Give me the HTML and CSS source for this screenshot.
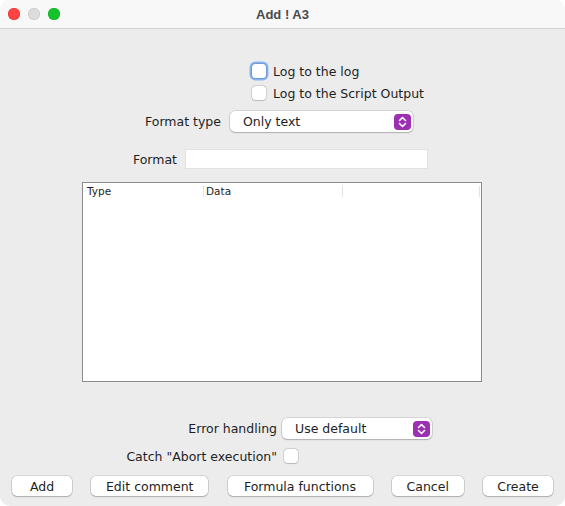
FILE: index.html
```html
<!DOCTYPE html>
<html>
<head>
<meta charset="utf-8">
<title>Add ! A3</title>
<link rel="stylesheet" href="styles.css">
</head>
<body>
<div class="window">
  <div class="titlebar">
    <div class="lights">
      <span class="light red"></span>
      <span class="light gray"></span>
      <span class="light green"></span>
    </div>
    <div class="title">Add ! A3</div>
  </div>
  <div class="content">
    <div class="check-row first">
      <span class="checkbox focused"></span>
      <span class="check-label">Log to the log</span>
    </div>
    <div class="check-row second">
      <span class="checkbox"></span>
      <span class="check-label">Log to the Script Output</span>
    </div>
    <div class="form-row type-row">
      <span class="label type-label">Format type</span>
      <div class="select type-select">
        <span class="select-text">Only text</span>
        <span class="stepper"><svg width="17" height="16" viewBox="0 0 17 16"><path d="M5.5 6.5 L8.5 3.5 L11.5 6.5 M5.5 9.5 L8.5 12.5 L11.5 9.5" fill="none" stroke="#fff" stroke-width="1.6" stroke-linecap="round" stroke-linejoin="round"/></svg></span>
      </div>
    </div>
    <div class="form-row format-row">
      <span class="label format-label">Format</span>
      <div class="input"></div>
    </div>
    <div class="table">
      <div class="thead">
        <div class="th c1">Type</div>
        <div class="th c2">Data</div>
        <div class="th c3"></div>
      </div>
    </div>
    <div class="form-row error-row">
      <span class="label error-label">Error handling</span>
      <div class="select error-select">
        <span class="select-text">Use default</span>
        <span class="stepper"><svg width="17" height="16" viewBox="0 0 17 16"><path d="M5.5 6.5 L8.5 3.5 L11.5 6.5 M5.5 9.5 L8.5 12.5 L11.5 9.5" fill="none" stroke="#fff" stroke-width="1.6" stroke-linecap="round" stroke-linejoin="round"/></svg></span>
      </div>
    </div>
    <div class="form-row catch-row">
      <span class="label catch-label">Catch "Abort execution"</span>
      <span class="checkbox"></span>
    </div>
    <div class="buttons">
      <button class="btn b-add">Add</button>
      <button class="btn b-edit">Edit comment</button>
      <button class="btn b-formula">Formula functions</button>
      <button class="btn b-cancel">Cancel</button>
      <button class="btn b-create">Create</button>
    </div>
  </div>
</div>
</body>
</html>
```
FILE: styles.css
```css
* { box-sizing: border-box; }
html, body { margin: 0; padding: 0; background: #ffffff; }
body {
  width: 565px;
  height: 506px;
  overflow: hidden;
  font-family: "DejaVu Sans", sans-serif;
  font-size: 12.5px;
  color: #1e1e1e;
}
.window {
  width: 565px;
  height: 506px;
  background: #ececec;
  border-radius: 10px;
  overflow: hidden;
  display: flex;
  flex-direction: column;
}
.titlebar {
  height: 29px;
  flex: none;
  background: #f8f8f8;
  border-bottom: 1px solid #d2d2d2;
  display: flex;
  align-items: center;
  position: relative;
}
.lights {
  display: flex;
  gap: 8px;
  padding-left: 8px;
  margin-top: -1px;
}
.light {
  width: 12px;
  height: 12px;
  border-radius: 50%;
}
.light.red { background: #fc4542; box-shadow: inset 0 0 0 0.5px #e0322f; }
.light.gray { background: #dcdcdc; box-shadow: inset 0 0 0 0.5px #c4c4c4; }
.light.green { background: #14c22a; box-shadow: inset 0 0 0 0.5px #0ea623; }
.title {
  position: absolute;
  left: 0;
  right: 0;
  top: 0;
  height: 28px;
  line-height: 29px;
  text-align: center;
  font-family: "Liberation Sans", Arial, sans-serif;
  font-weight: bold;
  font-size: 13px;
  color: #4a4a4a;
}
.content {
  display: flex;
  flex-direction: column;
  padding-top: 32px;
}
.check-row {
  height: 20px;
  display: flex;
  align-items: center;
  padding-left: 252px;
}
.check-row.second { margin-top: 2px; }
.checkbox {
  width: 14px;
  height: 14px;
  flex: none;
  background: #ffffff;
  border-radius: 3.5px;
  box-shadow: 0 0 0 0.5px rgba(0,0,0,0.22), 0 0.5px 1px rgba(0,0,0,0.12);
}
.checkbox.focused {
  box-shadow: 0 0 0 1px rgba(0,0,0,0.15), 0 0 0 2.5px rgba(70,145,245,0.6);
}
.check-label { margin-left: 7px; }
.form-row {
  display: flex;
  align-items: center;
}
.label {
  text-align: right;
  flex: none;
}
.type-row { margin-top: 8px; height: 21px; }
.type-label { width: 221px; margin-right: 9px; }
.select {
  height: 21px;
  background: #ffffff;
  border-radius: 5px;
  box-shadow: 0 0 0 0.5px rgba(0,0,0,0.2), 0 1px 1.5px rgba(0,0,0,0.18);
  display: flex;
  align-items: center;
  justify-content: space-between;
  padding-left: 13px;
  padding-right: 2px;
}
.type-select { width: 183px; }
.stepper {
  width: 17px;
  height: 16px;
  border-radius: 4px;
  background: #9d2fb3;
  display: flex;
}
.format-row { margin-top: 17px; height: 20px; }
.format-label { width: 177px; margin-right: 8px; }
.input {
  width: 243px;
  height: 20px;
  background: #ffffff;
  border: 1px solid #e2e2e2;
}
.table {
  margin-top: 13px;
  margin-left: 82px;
  width: 400px;
  height: 200px;
  background: #ffffff;
  border: 1px solid #8c8c8c;
}
.thead {
  display: grid;
  grid-template-columns: 121px 139px 137px;
  height: 16px;
  font-size: 10.5px;
  align-items: center;
}
.th {
  position: relative;
  height: 16px;
  line-height: 16px;
}
.th::after {
  content: "";
  position: absolute;
  right: 0;
  top: 3px;
  height: 11px;
  width: 1px;
  background: #e3e3e3;
}
.c1 { padding-left: 4px; }
.c2 { padding-left: 2px; }
.error-row { margin-top: 36px; height: 21px; }
.error-label { width: 277px; margin-right: 5px; }
.error-select { width: 150px; }
.catch-row { margin-top: 10px; height: 14px; }
.catch-label { width: 277px; margin-right: 7px; }
.buttons {
  margin-top: 13px;
  display: flex;
  justify-content: space-between;
  padding: 0 12px;
}
.btn {
  height: 20px;
  border: none;
  background: #ffffff;
  border-radius: 5px;
  box-shadow: 0 0 0 0.5px rgba(0,0,0,0.2), 0 1px 1.5px rgba(0,0,0,0.2);
  font-family: "DejaVu Sans", sans-serif;
  font-size: 12.5px;
  color: #1e1e1e;
  padding: 0;
}
.b-add { width: 60px; }
.b-edit { width: 117px; }
.b-formula { width: 145px; }
.b-cancel { width: 72px; }
.b-create { width: 70px; }
```
